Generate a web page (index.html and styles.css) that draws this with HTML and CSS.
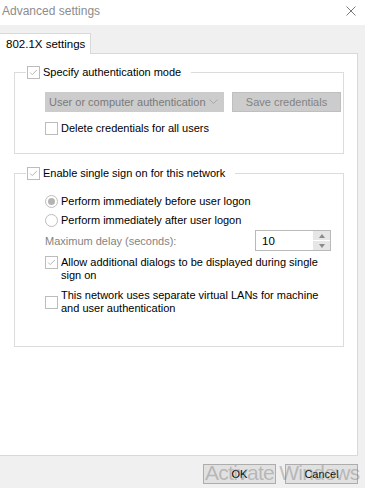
FILE: index.html
```html
<!DOCTYPE html>
<html lang="en">
<head>
  <meta charset="UTF-8">
  <title>Advanced settings</title>
  <link rel="stylesheet" href="styles.css">
</head>
<body>
<div class="titlebar">
  <span class="title">Advanced settings</span>
  <svg class="close" width="10" height="10" viewBox="0 0 10 10">
    <path d="M0.5 0.5 L9.5 9.5 M9.5 0.5 L0.5 9.5" stroke="#7a7a7a" stroke-width="1" fill="none"/>
  </svg>
</div>

<div class="tabs">
  <div class="tab">802.1X settings</div>
</div>

<div class="panel">
  <fieldset class="group g1">
    <legend><span class="check"><span class="cb on"><svg viewBox="0 0 13 13"><path d="M2.5 6.5 L5 9 L10.5 3.5"/></svg></span>Specify authentication mode</span></legend>
    <div class="content">
      <div class="row">
        <div class="select"><span>User or computer authentication</span>
          <svg class="chev" width="9" height="5" viewBox="0 0 9 5"><path d="M0.5 0.5 L4.5 4.5 L8.5 0.5"/></svg>
        </div>
        <div class="btn off">Save credentials</div>
      </div>
      <div class="check line"><span class="cb"></span>Delete credentials for all users</div>
    </div>
  </fieldset>

  <fieldset class="group g2">
    <legend><span class="check"><span class="cb on"><svg viewBox="0 0 13 13"><path d="M2.5 6.5 L5 9 L10.5 3.5"/></svg></span>Enable single sign on for this network</span></legend>
    <div class="content">
      <div class="check radio-row"><span class="radio on"></span>Perform immediately before user logon</div>
      <div class="check radio-row r2"><span class="radio"></span>Perform immediately after user logon</div>
      <div class="delay-row">
        <span class="muted">Maximum delay (seconds):</span>
        <div class="spin">
          <span class="spin-val">10</span>
          <div class="spin-btns"><span class="up"></span><span class="down"></span></div>
        </div>
      </div>
      <div class="check multi allow"><span class="cb on"><svg viewBox="0 0 13 13"><path d="M2.5 6.5 L5 9 L10.5 3.5"/></svg></span><span>Allow additional dialogs to be displayed during single<br>sign on</span></div>
      <div class="check multi vlan"><span class="cb"></span><span>This network uses separate virtual LANs for machine<br>and user authentication</span></div>
    </div>
  </fieldset>
</div>

<div class="footer">
  <button class="btn">OK</button>
  <button class="btn">Cancel</button>
</div>

<div class="watermark">Activate Windows</div>
</body>
</html>
```

FILE: styles.css
```css
* {
  box-sizing: border-box;
}
body {
  margin: 0;
  width: 365px;
  height: 488px;
  overflow: hidden;
  position: relative;
  background: #f0f0f0;
  font-family: "Liberation Sans", Arial, sans-serif;
  font-size: 11px;
  color: #000;
}
.titlebar {
  height: 25px;
  background: #fff;
  display: flex;
  align-items: center;
  justify-content: space-between;
  padding: 0 9px 3px 2px;
}
.title {
  color: #8c8c8c;
  font-size: 12px;
}
.tabs {
  padding-top: 8px;
  display: flex;
}
.tab {
  position: relative;
  z-index: 1;
  height: 21px;
  margin-bottom: -1px;
  width: 91px;
  padding: 4px 0 0 6px;
  background: #fff;
  border: 1px solid #d9d9d9;
  border-bottom: 0;
  border-left: 0;
  font-size: 11.5px;
}
.panel {
  width: 358px;
  height: 403px;
  background: #fff;
  border: 1px solid #d9d9d9;
  border-left: 0;
  padding: 12px 13px 0 14px;
}
.group {
  width: 330px;
  margin: 0;
  padding: 0;
  border: 1px solid #dcdcdc;
  min-width: 0;
}
.group legend {
  margin-left: 11px;
  padding: 0 10px 0 1px;
  height: 13px;
  line-height: 13px;
}
.check {
  display: flex;
  align-items: center;
  gap: 3px;
  line-height: 13px;
}
legend .check {
  display: inline-flex;
}
.cb {
  flex: none;
  width: 13px;
  height: 13px;
  border: 1px solid #bcbcbc;
  background: #fff;
  display: flex;
}
.cb svg {
  width: 11px;
  height: 11px;
}
.cb svg path {
  fill: none;
  stroke: #b0b0b0;
  stroke-width: 1.1;
}
.radio {
  flex: none;
  width: 13px;
  height: 13px;
  border: 1px solid #bcbcbc;
  border-radius: 50%;
  background: #fff;
  display: flex;
  align-items: center;
  justify-content: center;
}
.radio.on::after {
  content: "";
  width: 7px;
  height: 7px;
  border-radius: 50%;
  background: #b4b4b4;
}
.g1 .content {
  padding: 13px 0 18px 30px;
}
.row {
  display: flex;
  gap: 8px;
  height: 20px;
}
.select {
  width: 179px;
  background: #cccccc;
  color: #7a7a7a;
  display: flex;
  align-items: center;
  justify-content: space-between;
  padding: 0 6px 1px 4px;
  white-space: nowrap;
  font-size: 11px;
}
.chev path {
  fill: none;
  stroke: #a8a8a8;
}
.btn {
  font-family: inherit;
  font-size: 11px;
  color: #000;
  background: #e1e1e1;
  border: 1px solid #adadad;
  display: flex;
  align-items: center;
  justify-content: center;
  padding: 0;
}
.btn.off {
  width: 109px;
  background: #cccccc;
  border-color: #bfbfbf;
  color: #838383;
  font-size: 11px;
}
.line {
  margin-top: 10px;
}
.g2 {
  margin-top: 13px;
}
.g2 .content {
  padding: 11px 12px 31px 30px;
}
.radio-row {
  height: 20px;
}
.radio-row.r2 {
  height: 19px;
}
.delay-row {
  display: flex;
  align-items: center;
  justify-content: space-between;
  height: 21px;
}
.muted {
  color: #838383;
}
.spin {
  width: 76px;
  height: 21px;
  border: 1px solid #b9b9b9;
  display: flex;
}
.spin-val {
  flex: 1;
  padding: 4px 0 0 6px;
  font-size: 11.5px;
}
.spin-btns {
  width: 17px;
  display: flex;
  flex-direction: column;
  gap: 1px;
  background: #fff;
}
.spin-btns span {
  flex: 1;
  background: #e6e6e6;
  display: flex;
  align-items: center;
  justify-content: center;
}
.spin-btns .up::after {
  content: "";
  border: 3px solid transparent;
  border-top: 0;
  border-bottom: 4px solid #8a8a8a;
}
.spin-btns .down::after {
  content: "";
  border: 3px solid transparent;
  border-bottom: 0;
  border-top: 4px solid #8a8a8a;
}
.multi {
  align-items: flex-start;
}
.allow {
  margin-top: 5px;
}
.vlan {
  margin-top: 7px;
  align-items: center;
}
.footer {
  display: flex;
  justify-content: flex-end;
  gap: 9px;
  padding: 8px 7px 0 0;
}
.footer .btn {
  width: 73px;
  height: 20px;
}
.watermark {
  position: absolute;
  left: 205px;
  top: 461px;
  font-size: 21px;
  letter-spacing: -0.7px;
  color: rgba(130, 130, 130, 0.45);
  white-space: nowrap;
  pointer-events: none;
}
```
